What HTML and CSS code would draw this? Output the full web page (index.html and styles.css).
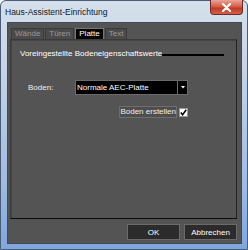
FILE: index.html
```html
<!DOCTYPE html>
<html>
<head>
  <meta charset="UTF-8">
  <title>Haus-Assistent-Einrichtung</title>
  <link rel="stylesheet" href="styles.css">
</head>
<body>
  <div class="window">
    <div class="titlebar">
      <span class="title">Haus-Assistent-Einrichtung</span>
      <button class="close-btn">
        <svg width="11" height="9" viewBox="0 0 11 9">
          <path d="M2 1 L9 8 M9 1 L2 8" stroke="#fff" stroke-width="2.2" stroke-linecap="round"/>
        </svg>
      </button>
    </div>
    <div class="client">
      <div class="tabs">
        <div class="tab">Wände</div>
        <div class="tab">Türen</div>
        <div class="tab active">Platte</div>
        <div class="tab">Text</div>
      </div>
      <div class="panel">
        <div class="group-title">
          <span>Voreingestellte Bodeneigenschaftswerte</span>
          <div class="group-line"></div>
        </div>
        <div class="field-row">
          <span class="label">Boden:</span>
          <div class="combo">
            <span class="combo-text">Normale AEC-Platte</span>
            <div class="combo-arrow">
              <svg width="4" height="3" viewBox="0 0 4 3"><path d="M0 0 H4 L2 2.5 Z" fill="#fff"/></svg>
            </div>
          </div>
        </div>
        <div class="check-row">
          <span class="check-label">Boden erstellen</span>
          <div class="checkbox">
            <svg width="7" height="7" viewBox="0 0 7 7"><path d="M0.8 3.5 L2.6 5.8 L6.2 0.8" stroke="#000" stroke-width="1.5" fill="none"/></svg>
          </div>
        </div>
      </div>
      <div class="buttons">
        <button class="btn">OK</button>
        <button class="btn">Abbrechen</button>
      </div>
    </div>
  </div>
</body>
</html>
```

FILE: styles.css
```css
body {
  margin: 0;
  font-family: "Liberation Sans", Arial, sans-serif;
  font-size: 8px;
  background: #fff;
}
.window {
  width: 248px;
  height: 250px;
  box-sizing: border-box;
  border: 1px solid #4b5d76;
  border-radius: 6px 6px 0 0;
  background: linear-gradient(180deg, #d6e0ec 0%, #c3d3e6 30%, #9dbbe2 75%, #7fa6dc 100%);
  padding: 0 5px 5px 6px;
  display: flex;
  flex-direction: column;
}
.titlebar {
  height: 21px;
  display: flex;
  align-items: flex-start;
}
.title {
  font-size: 8.5px;
  color: #0e1826;
  margin-top: 6px;
  margin-left: -2px;
}
.close-btn {
  margin-left: auto;
  margin-right: -1px;
  margin-top: -1px;
  width: 33px;
  height: 15px;
  border: 1px solid #6b2a22;
  border-top: none;
  border-radius: 0 0 4px 4px;
  background: linear-gradient(180deg, #e8a597 0%, #d5604a 45%, #c13a22 60%, #d4604a 100%);
  padding: 0;
  display: flex;
  align-items: center;
  justify-content: center;
}
.client {
  flex: 1;
  background: #545454;
  border: 1px solid #3c4a5c;
  padding: 5px 4px 3px 2px;
  display: flex;
  flex-direction: column;
}
.tabs {
  display: flex;
  height: 11px;
  margin-left: 1px;
}
.tab {
  height: 11px;
  box-sizing: border-box;
  padding: 0 3px;
  margin-right: 1px;
  background: #4b4b4b;
  border: 1px solid #3a3a3a;
  border-bottom: none;
  color: #9a9a9a;
  line-height: 10px;
}
.tab.active {
  background: #050505;
  color: #fff;
  border-color: #777 #777 #050505 #777;
}
.panel {
  flex: 1;
  border: 1px solid #3a3a3a;
  border-bottom-color: #0c0c0c;
  border-right-color: #222;
  box-shadow: inset 1px 1px 0 #444;
  padding: 8px 12px 0 9px;
}
.group-title {
  display: flex;
  align-items: flex-end;
  color: #fff;
  height: 10px;
}
.group-line {
  flex: 1;
  height: 2px;
  background: #000;
  margin-bottom: 2px;
}
.field-row {
  display: flex;
  align-items: center;
  margin-top: 22px;
  padding-left: 8px;
}
.label {
  color: #eee;
  width: 47px;
}
.combo {
  width: 113px;
  height: 15px;
  box-sizing: border-box;
  background: #000;
  border: 1px solid #6a6a6a;
  display: flex;
  align-items: center;
}
.combo-text {
  flex: 1;
  color: #fff;
  padding-left: 1px;
}
.combo-arrow {
  width: 10px;
  height: 13px;
  box-sizing: border-box;
  border-left: 1px solid #6a6a6a;
  display: flex;
  align-items: center;
  justify-content: center;
}
.check-row {
  display: flex;
  justify-content: flex-end;
  align-items: center;
  margin-top: 11px;
  padding-right: 36px;
  gap: 2px;
}
.check-label {
  color: #eee;
  background: #4e4e4e;
  border: 1px solid #6e6e6e;
  padding: 0;
  height: 10px;
  line-height: 10px;
}
.checkbox {
  width: 7px;
  height: 7px;
  background: #fff;
  border: 1px solid #999;
  display: flex;
  align-items: center;
  justify-content: center;
}
.buttons {
  display: flex;
  justify-content: flex-end;
  gap: 4px;
  margin-top: 5px;
}
.btn {
  width: 53px;
  height: 16px;
  background: #2b2b2b;
  border: 1px solid #6a6a6a;
  color: #fff;
  font-family: "Liberation Sans", Arial, sans-serif;
  font-size: 8px;
  padding: 0;
}
```
